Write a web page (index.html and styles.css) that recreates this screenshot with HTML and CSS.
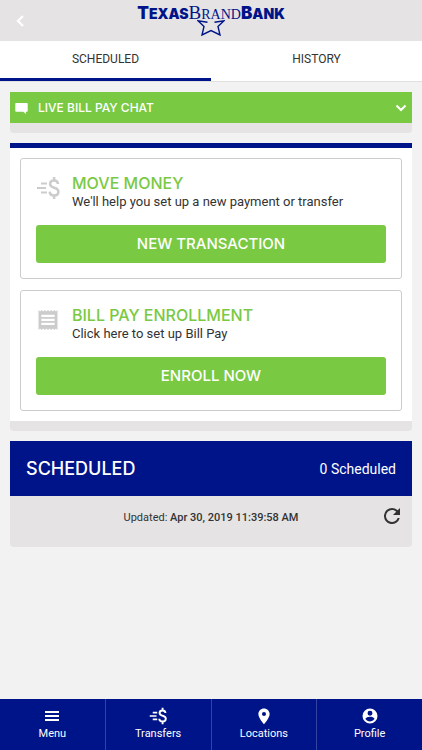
FILE: index.html
```html
<!DOCTYPE html>
<html lang="en">
<head>
    <meta charset="UTF-8">
    <meta name="viewport" content="width=device-width, initial-scale=1">
    <title>Texas Brand Bank - Bill Pay</title>
    <link rel="stylesheet" href="styles.css">
</head>
<body>

<!-- shared icon -->
<svg class="defs" width="0" height="0" aria-hidden="true">
    <symbol id="money" viewBox="0 0 24 24">
        <path d="M5 7.5h6M1 12h9M5 16.500h6" fill="none" stroke="currentColor" stroke-width="2.200"/>
        <path d="M22 8c-.2-2-1.600-3.400-3.900-3.400-2.400 0-4 1.300-4 3.300 0 2.300 1.800 3.100 4.100 3.800 2.500.7 4.200 1.600 4.200 4 0 2.200-1.700 3.700-4.200 3.700-2.600 0-4.400-1.400-4.500-3.800M18.100 1v3.600M18.100 19.400V23" fill="none" stroke="currentColor" stroke-width="2.500"/>
    </symbol>
</svg>

<header class="header">
    <button class="back" type="button" aria-label="Back">
        <svg width="8" height="12" viewBox="0 0 8 12"><path d="M7 1L2 6l5 5" fill="none" stroke="currentColor" stroke-width="2.400"/></svg>
    </button>
    <div class="logo">
        <div class="name"><span class="heavy"><b>T</b>EXAS</span><span class="light"><b>B</b>RAND</span><span class="heavy"><b>B</b>ANK</span></div>
        <svg class="star" width="28" height="16" viewBox="0 0 28 16"><path d="M10.500 2.300L1 .8l6 5.700-2 8.500 9-4.500 9 4.500-2-8.500 6-5.700-9.500 1.500" fill="none" stroke="currentColor" stroke-width="1.400"/></svg>
    </div>
</header>

<nav class="tabs">
    <a class="current" href="#scheduled">SCHEDULED</a>
    <a href="#history">HISTORY</a>
</nav>

<main class="main">
    <section class="panel">
        <button class="chat" type="button">
            <svg width="13" height="12" viewBox="0 0 13 12"><path d="M1 1h11q.7 0 .7.700V9q0 .7-.7.700h-1V12L8.200 9.700H1Q.3 9.700.3 9V1.700Q.3 1 1 1z" fill="currentColor"/></svg>
            <span>LIVE BILL PAY CHAT</span>
            <svg width="12" height="8" viewBox="0 0 12 8"><path d="M1.500 1.500L6 6l4.500-4.500" fill="none" stroke="currentColor" stroke-width="2"/></svg>
        </button>
        <div class="foot"></div>
    </section>

    <section class="panel">
        <div class="actions">
            <div class="item">
                <div class="info">
                    <svg width="24" height="24"><use href="#money"/></svg>
                    <div>
                        <h2>MOVE MONEY</h2>
                        <p>We'll help you set up a new payment or transfer</p>
                    </div>
                </div>
                <button class="btn" type="button">NEW TRANSACTION</button>
            </div>
            <div class="item">
                <div class="info">
                    <svg width="24" height="24" viewBox="0 0 24 24"><path d="M18.600 17H5.300v-2.200h13.300zm0-4H5.300v-2.200h13.300zm0-4H5.300V6.800h13.300zM2.500 22l1.600-1.600L5.700 22l1.600-1.600L8.900 22l1.500-1.600L12 22l1.600-1.600L15.100 22l1.600-1.600 1.600 1.600 1.600-1.600 1.600 1.600V2l-1.600 1.600L18.300 2l-1.600 1.600L15.100 2l-1.500 1.600L12 2l-1.600 1.600L8.900 2 7.300 3.600 5.700 2 4.100 3.600 2.500 2z" fill="currentColor" fill-rule="evenodd"/></svg>
                    <div>
                        <h2>BILL PAY ENROLLMENT</h2>
                        <p>Click here to set up Bill Pay</p>
                    </div>
                </div>
                <button class="btn" type="button">ENROLL NOW</button>
            </div>
        </div>
        <div class="foot"></div>
    </section>

    <section class="panel" id="scheduled">
        <div class="title">
            <h1>SCHEDULED</h1>
            <span>0 Scheduled</span>
        </div>
        <div class="updated">
            <p>Updated: <b>Apr 30, 2019 11:39:58 AM</b></p>
            <button class="refresh" type="button" aria-label="Refresh">
                <svg width="24" height="24" viewBox="0 0 24 24"><path d="M17.650 6.350A7.960 7.960 0 0 0 12 4a8 8 0 1 0 7.730 10h-2.080A6 6 0 1 1 12 6c1.660 0 3.140.690 4.220 1.780L13 11h7V4z" fill="currentColor"/></svg>
            </button>
        </div>
    </section>
</main>

<nav class="bottom">
    <a href="#menu">
        <svg width="18" height="18" viewBox="0 0 18 18"><path d="M2 5h14M2 9h14M2 13h14" stroke="currentColor" stroke-width="1.800"/></svg>
        Menu
    </a>
    <a href="#transfers">
        <svg width="18" height="18"><use href="#money"/></svg>
        Transfers
    </a>
    <a href="#locations">
        <svg width="18" height="18" viewBox="0 0 24 24"><path d="M12 2C7.900 2 4.500 5.300 4.500 9.400 4.500 15 12 23 12 23s7.500-8 7.500-13.600C19.500 5.300 16.100 2 12 2zm0 10a2.700 2.700 0 1 1 0-5.400 2.700 2.700 0 0 1 0 5.400z" fill="currentColor"/></svg>
        Locations
    </a>
    <a href="#profile">
        <svg width="18" height="18" viewBox="0 0 24 24"><path d="M12 2a10 10 0 1 0 0 20 10 10 0 0 0 0-20zm0 3a3.300 3.300 0 1 1 0 6.600A3.300 3.300 0 0 1 12 5zm0 14.200c-2.500 0-4.700-1.300-6-3.200 0-2 4-3.100 6-3.100s6 1.100 6 3.100a7.200 7.200 0 0 1-6 3.200z" fill="currentColor"/></svg>
        Profile
    </a>
</nav>

</body>
</html>
```

FILE: styles.css
```css
*{
    padding: 0;
    margin: 0;
    box-sizing: border-box;
}
body{
    min-height: 100vh;
    display: flex;
    flex-direction: column;
    background-color: #f2f2f2;
    color: #333;
    font-family: Roboto, "Liberation Sans", sans-serif;
}
a{
    color: inherit;
    text-decoration: none;
}
button{
    border: 0;
    background: none;
    color: inherit;
    cursor: pointer;
}
svg{
    display: block;
    flex: none;
}
.defs{
    position: absolute;
}

/* header */
.header{
    height: 41px;
    padding: 0 16px;
    display: grid;
    grid-template-columns: 1fr auto 1fr;
    background-color: #e5e3e4;
}
.back{
    justify-self: start;
    color: white;
}
.logo{
    padding-top: 5px;
    display: flex;
    flex-direction: column;
    align-items: center;
    color: #001489;
}
.name{
    height: 15px;
    line-height: 15px;
    white-space: nowrap;
}
.heavy{
    font: 900 14px/15px Inter, sans-serif;
}
.heavy b{
    font-size: 17px;
    font-weight: 900;
}
.light{
    font: 400 14px/15px "Liberation Serif", serif;
}
.light b{
    font-size: 19px;
    font-weight: 400;
}
.tabs{
    height: 41px;
    display: flex;
    background-color: white;
    border-bottom: 1px solid #e0e0e0;
}
.tabs a{
    flex: 1;
    text-align: center;
    font-size: 12px;
    line-height: 37px;
}
.tabs .current{
    border-bottom: 3px solid #001489;
}

/* panels */
.main{
    flex: 1;
    padding: 10px;
    display: flex;
    flex-direction: column;
    gap: 10px;
}
.panel{
    border-radius: 0 0 4px 4px;
    overflow: hidden;
}
.foot{
    height: 10px;
    background-color: #e5e3e4;
}
.chat{
    width: 100%;
    height: 31px;
    padding: 0 5px;
    display: flex;
    align-items: center;
    gap: 10px;
    background-color: #7ac943;
    color: white;
    font: 500 12px/16px Inter, sans-serif;
}
.chat span{
    flex: 1;
    text-align: left;
}
.actions{
    padding: 10px;
    display: flex;
    flex-direction: column;
    gap: 11px;
    background-color: white;
    border-top: 5px solid #001489;
}
.item{
    padding: 15px;
    border: 1px solid #ccc;
    border-radius: 3px;
}
.info{
    display: flex;
    gap: 12px;
    margin-bottom: 14px;
}
.info svg{
    margin-top: 2px;
    color: #ccc;
}
h2{
    color: #7ac943;
    font: 500 16px/19px Inter, sans-serif;
}
.info p{
    font-size: 13px;
    line-height: 18px;
}
.btn{
    width: 100%;
    height: 38px;
    border-radius: 3px;
    background-color: #7ac943;
    color: white;
    font: 500 15px/18px Inter, sans-serif;
}
.title{
    height: 55px;
    padding: 0 16px;
    display: flex;
    align-items: center;
    justify-content: space-between;
    background-color: #001489;
    color: white;
    font-size: 14px;
}
h1{
    font: 500 18px/20px Inter, sans-serif;
}
.updated{
    height: 51px;
    padding: 8px 8px 0;
    display: grid;
    grid-template-columns: 1fr auto 1fr;
    align-items: start;
    background-color: #e5e3e4;
    font-size: 11px;
    line-height: 27px;
}
.updated p{
    grid-column: 2;
}
.updated b{
    font-weight: 500;
}
.refresh{
    justify-self: end;
}

/* bottom bar */
.bottom{
    height: 51px;
    display: flex;
    background-color: #001489;
    color: white;
}
.bottom a{
    flex: 1;
    padding-top: 8px;
    display: flex;
    flex-direction: column;
    align-items: center;
    font-size: 11px;
    line-height: 18px;
}
.bottom a+a{
    border-left: 1px solid #33439f;
}
```
